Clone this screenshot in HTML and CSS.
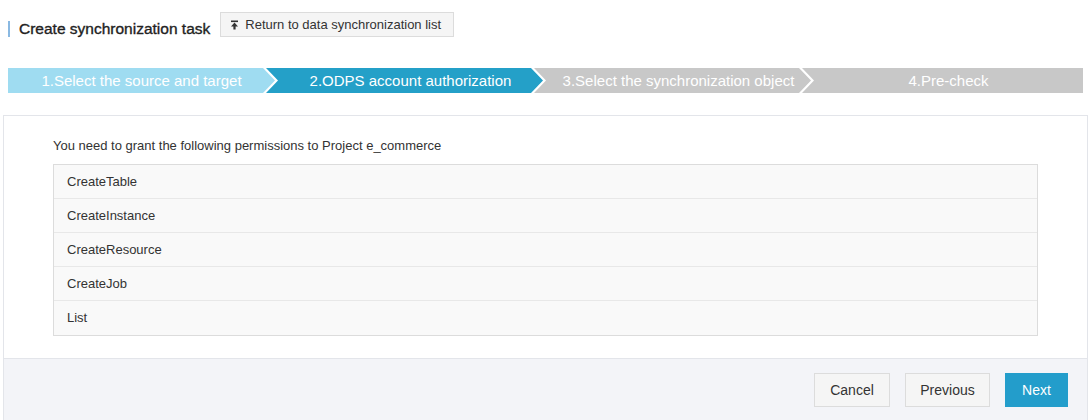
FILE: index.html
```html
<!DOCTYPE html>
<html lang="en">
<head>
<meta charset="utf-8">
<title>Create synchronization task</title>
<link rel="stylesheet" href="styles.css">
</head>
<body>
<div class="header">
  <h1 class="title">Create synchronization task</h1>
  <button class="back-btn" type="button">
    <svg class="back-icon" width="9" height="10" viewBox="0 0 9 10" aria-hidden="true">
      <rect x="1" y="0.5" width="7" height="1.6" fill="#333"/>
      <path d="M4.5 2.6 L8 6.4 L5.6 6.4 L5.6 9.5 L3.4 9.5 L3.4 6.4 L1 6.4 Z" fill="#333"/>
    </svg>
    <span>Return to data synchronization list</span>
  </button>
</div>

<div class="steps">
  <div class="step step-done step-first">1.Select the source and target</div>
  <div class="step step-active">2.ODPS account authorization</div>
  <div class="step step-todo">3.Select the synchronization object</div>
  <div class="step step-todo step-last">4.Pre-check</div>
</div>

<div class="card">
  <div class="card-body">
    <p class="intro">You need to grant the following permissions to Project e_commerce</p>
    <ul class="perm-list">
      <li class="perm">CreateTable</li>
      <li class="perm">CreateInstance</li>
      <li class="perm">CreateResource</li>
      <li class="perm">CreateJob</li>
      <li class="perm">List</li>
    </ul>
  </div>
  <div class="card-footer">
    <button class="btn" type="button">Cancel</button>
    <button class="btn" type="button">Previous</button>
    <button class="btn btn-primary" type="button">Next</button>
  </div>
</div>
</body>
</html>
```

FILE: styles.css
```css
* { box-sizing: border-box; }

body {
  margin: 0;
  font-family: "Liberation Sans", Arial, Helvetica, sans-serif;
  color: #333;
  background: #fff;
}

.header {
  display: flex;
  align-items: flex-end;
  padding: 12px 0 0 8px;
}

.title {
  margin: 0;
  padding-left: 9px;
  border-left: 2px solid #8ab9e2;
  font-size: 15.5px;
  line-height: 16px;
  font-weight: normal;
  color: #222;
  -webkit-text-stroke: 0.35px #222;
}

.back-btn {
  margin-left: 10px;
  height: 25px;
  display: flex;
  align-items: center;
  gap: 6px;
  padding: 0 12px 0 9px;
  border: 1px solid #dcdcdc;
  background: #f5f5f5;
  font-family: inherit;
  font-size: 13px;
  color: #333;
}

.back-icon { display: block; }

.steps {
  display: flex;
  margin: 31px 7px 0 8px;
  height: 25px;
}

.step {
  height: 25px;
  line-height: 25px;
  font-size: 15px;
  color: #fff;
  text-align: center;
  white-space: nowrap;
  width: 277px;
  margin-left: -9px;
  padding-left: 12px;
  clip-path: polygon(0 0, calc(100% - 12px) 0, 100% 50%, calc(100% - 12px) 100%, 0 100%, 12px 50%);
}

.step-first {
  width: 267px;
  margin-left: 0;
  padding-left: 0;
  clip-path: polygon(0 0, calc(100% - 12px) 0, 100% 50%, calc(100% - 12px) 100%, 0 100%);
}

.step-last {
  flex: 1;
  width: auto;
  clip-path: polygon(0 0, 100% 0, 100% 100%, 0 100%, 12px 50%);
}

.step-done { background: #9fdcf1; }
.step-active { background: #24a0c8; }
.step-todo { background: #c8c8c8; }

.card {
  margin: 22px 2px 0 3px;
  border: 1px solid #e3e5ea;
  border-bottom: none;
}

.card-body {
  padding: 22px 49px 22px 49px;
}

.intro {
  margin: 0 0 10px 0;
  font-size: 13px;
  line-height: 16px;
  color: #333;
}

.perm-list {
  list-style: none;
  margin: 0;
  padding: 0;
  border: 1px solid #dcdcdc;
  background: #f9f9f9;
}

.perm {
  height: 34px;
  line-height: 33px;
  padding-left: 13px;
  font-size: 13px;
  color: #333;
  border-bottom: 1px solid #e8e8e8;
}

.perm:last-child {
  height: 34px;
  line-height: 34px;
  border-bottom: none;
}

.card-footer {
  display: flex;
  justify-content: flex-end;
  gap: 15px;
  padding: 14px 19px 14px;
  border-top: 1px solid #e3e5ea;
  background: #f3f4f8;
}

.btn {
  height: 34px;
  padding: 0 14px;
  border: 1px solid #dcdcdc;
  background: #f5f5f5;
  font-family: inherit;
  font-size: 14px;
  color: #333;
}

.btn:nth-child(1) { width: 76px; }
.btn:nth-child(2) { width: 85px; }

.btn-primary {
  width: 63px;
  background: #239dcb;
  border-color: #239dcb;
  color: #fff;
}
```
